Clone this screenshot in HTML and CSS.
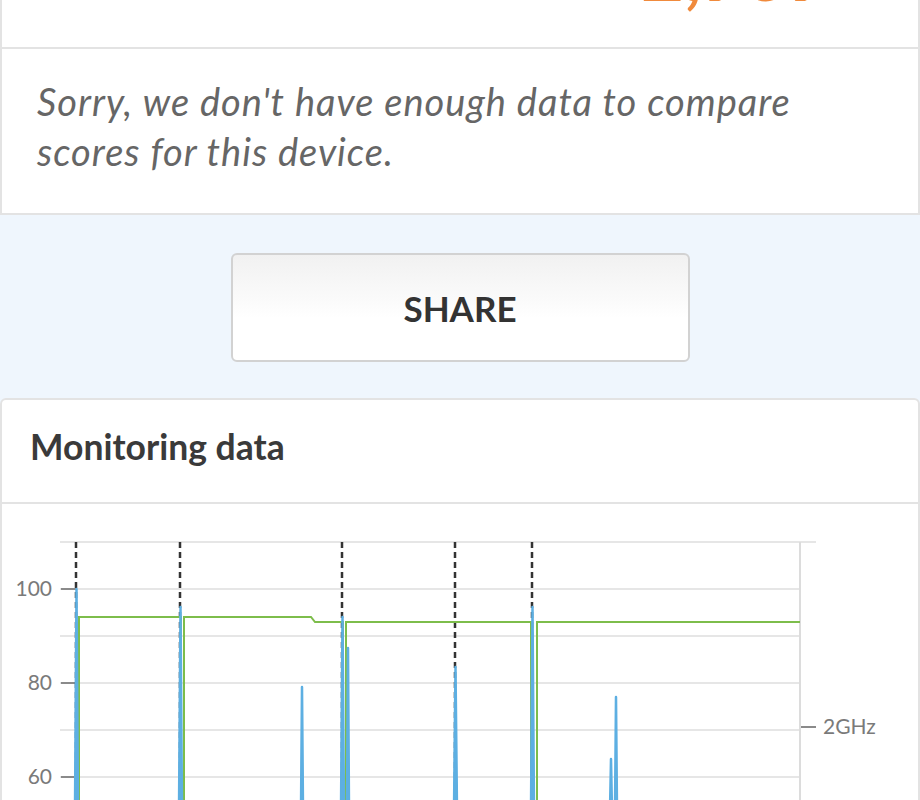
FILE: index.html
```html
<!DOCTYPE html>
<html lang="en">
<head>
<meta charset="utf-8">
<title>Results</title>
<link rel="stylesheet" href="styles.css">
</head>
<body>
<section class="group">
  <div class="row score-row">
    <span class="score-label">Lowest loop score</span>
    <span class="score-value">2,969</span>
  </div>
  <div class="row note-row">
    <p class="note">Sorry, we don't have enough data to compare scores for this device.</p>
  </div>
</section>

<div class="share-wrap">
  <button class="share">SHARE</button>
</div>

<section class="card monitor">
  <h2 class="card-title">Monitoring data</h2>
  <div class="chart">
    <svg width="916" height="300" viewBox="2 504 916 300" xmlns="http://www.w3.org/2000/svg">
      <g stroke="#e6e6e6" stroke-width="2">
        <line x1="60" y1="542" x2="816" y2="542"/>
        <line x1="60" y1="589" x2="800" y2="589"/>
        <line x1="60" y1="636" x2="800" y2="636"/>
        <line x1="60" y1="683" x2="800" y2="683"/>
        <line x1="60" y1="730" x2="800" y2="730"/>
        <line x1="60" y1="777" x2="800" y2="777"/>
      </g>
      <line x1="800" y1="542" x2="800" y2="810" stroke="#dcdcdc" stroke-width="2"/>
      <g stroke="#8a8a8a" stroke-width="2">
        <line x1="61" y1="589" x2="76" y2="589"/>
        <line x1="61" y1="683" x2="76" y2="683"/>
        <line x1="61" y1="777" x2="76" y2="777"/>
        <line x1="801" y1="727" x2="816" y2="727"/>
      </g>
      <g class="axis-label" text-anchor="end">
        <text x="52" y="596">100</text>
        <text x="52" y="690">80</text>
        <text x="52" y="784">60</text>
      </g>
      <text class="axis-label" x="823" y="734">2GHz</text>

      <g stroke="#333" stroke-width="2.5" stroke-dasharray="6 4">
        <line x1="76" y1="542" x2="76" y2="810"/>
        <line x1="180" y1="542" x2="180" y2="810"/>
        <line x1="342" y1="542" x2="342" y2="810"/>
        <line x1="455" y1="542" x2="455" y2="810"/>
        <line x1="532" y1="542" x2="532" y2="810"/>
      </g>

      <path d="M79 810 V617 H181 V810 M184 810 V617 H311 L315 622 H343 V810 M346 810 V622 H531 V810 M537 810 V622 H800"
            fill="none" stroke="#7dbd4b" stroke-width="2"/>

      <g fill="#5dafe2" stroke="#5dafe2" stroke-width="2.5" stroke-linejoin="round">
        <polygon points="75,810 76.5,589 78,810"/>
        <polygon points="179,810 180.5,607 182,810"/>
        <polygon points="301,810 302,687 303,810"/>
        <polygon points="341,810 342.5,617 344,810"/>
        <polygon points="347,810 348,648 349,810"/>
        <polygon points="454,810 455.5,667 457,810"/>
        <polygon points="531,810 532.5,607 534,810"/>
        <polygon points="610,810 611,759 612,810"/>
        <polygon points="615,810 616,697 617,810"/>
      </g>
    </svg>
  </div>
</section>
</body>
</html>
```

FILE: styles.css
```css
html, body {
  margin: 0;
  padding: 0;
}

body {
  background: #eff6fd;
  font-family: Lato, "Open Sans", sans-serif;
  overflow: hidden;
}

.group {
  background: #ffffff;
  border: 2px solid #e3e3e3;
  border-top: none;
}

.row + .row {
  border-top: 2px solid #e3e3e3;
}

.score-row {
  display: flex;
  align-items: center;
  justify-content: space-between;
  height: 120px;
  margin-top: -73px;
  padding: 0 88px 0 37px;
}

.score-label {
  font-size: 38px;
  font-weight: 700;
  color: #333;
  position: relative;
  top: -14px;
}

.score-value {
  font-size: 74px;
  font-weight: 700;
  color: #f08a3c;
  position: relative;
  top: -15px;
}

.note-row {
  padding: 27px 35px 37px;
}

.note {
  margin: 0;
  font-size: 38px;
  line-height: 50px;
  letter-spacing: 1px;
  font-style: italic;
  color: #666;
  max-width: 810px;
}

.share-wrap {
  display: flex;
  justify-content: center;
  padding: 38px 0 36px;
}

.share {
  width: 459px;
  height: 109px;
  border: 2px solid #d2d2d2;
  border-radius: 6px;
  background: linear-gradient(#f1f1f1 0%, #fbfbfb 45%, #ffffff 60%, #ffffff 100%);
  font-family: Lato, "Open Sans", sans-serif;
  font-size: 35px;
  font-weight: 700;
  color: #333;
  padding: 0;
}

.card {
  background: #ffffff;
  border: 2px solid #e3e3e3;
  border-radius: 6px 6px 0 0;
}

.card-title {
  margin: 0;
  height: 104px;
  box-sizing: border-box;
  padding: 25px 28px 0;
  font-size: 35.5px;
  font-weight: 700;
  color: #3a3a3a;
  border-bottom: 2px solid #e3e3e3;
}

.chart svg {
  display: block;
}

.axis-label {
  font-family: Lato, "Open Sans", sans-serif;
  font-size: 21px;
  fill: #7a7a7a;
}
```
